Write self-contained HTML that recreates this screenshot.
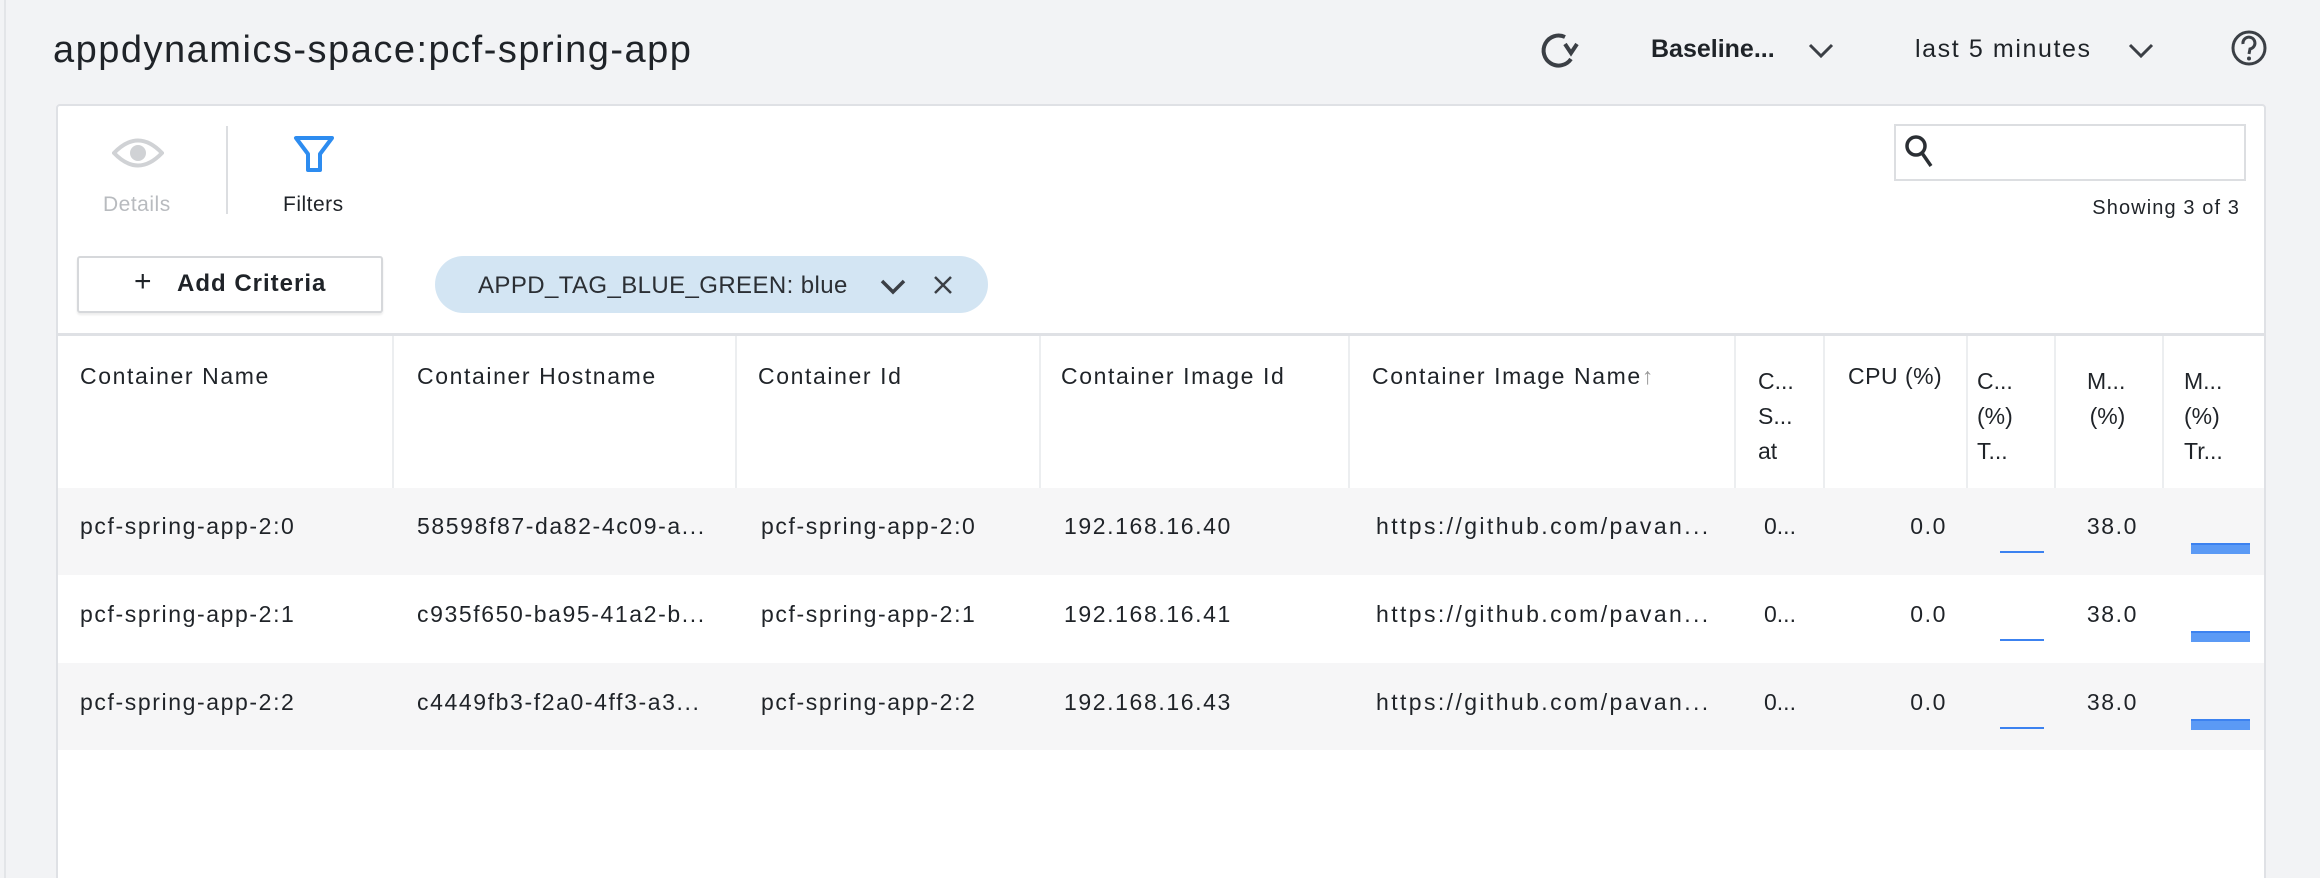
<!DOCTYPE html>
<html><head><meta charset="utf-8"><style>
*{margin:0;padding:0;box-sizing:border-box}
html,body{width:2320px;height:878px;overflow:hidden}
body{background:#f2f3f5;font-family:"Liberation Sans",sans-serif;color:#1f2328;position:relative}
.a{position:absolute;white-space:nowrap}
.panel{position:absolute;left:56px;top:104px;width:2210px;height:790px;background:#fff;border:2px solid #dfe1e5;border-radius:4px}
.t{font-size:23px;letter-spacing:1.6px}
.vl{position:absolute;width:2px;background:#eceef0;top:336px;height:152px}
.row{position:absolute;left:58px;width:2206px;height:87px}
</style></head><body>
<div class="a" style="left:4px;top:0;width:2px;height:878px;background:#e3e5e8"></div>
<div class="a" style="left:53px;top:29px;font-size:38px;letter-spacing:1.5px;color:#1f2328">appdynamics-space:pcf-spring-app</div>
<svg class="a" style="left:1535px;top:28px" width="46" height="46" viewBox="0 0 46 46"><path d="M30 9 A15 15 0 1 0 36 31" fill="none" stroke="#3b3f45" stroke-width="4"/><path d="M30 16 L36 25 L42 16" fill="none" stroke="#3b3f45" stroke-width="4"/></svg>
<div class="a" style="left:1651px;top:35px;font-size:25px;font-weight:bold;color:#1f2328">Baseline...</div>
<svg class="a" style="left:1808px;top:42px" width="26" height="18"><path d="M2 3 L13 14 L24 3" fill="none" stroke="#3b3f45" stroke-width="3"/></svg>
<div class="a" style="left:1915px;top:35px;font-size:25px;letter-spacing:1.6px;color:#1f2328">last 5 minutes</div>
<svg class="a" style="left:2128px;top:42px" width="26" height="18"><path d="M2 3 L13 14 L24 3" fill="none" stroke="#3b3f45" stroke-width="3"/></svg>
<svg class="a" style="left:2230px;top:29px" width="38" height="38" viewBox="0 0 38 38"><circle cx="19" cy="19" r="16" fill="none" stroke="#3b3f45" stroke-width="3"/><path d="M13 15 A6 6 0 1 1 20 20 L19 25" fill="none" stroke="#3b3f45" stroke-width="3"/><circle cx="19" cy="29.5" r="2" fill="#3b3f45"/></svg>
<div class="panel"></div>
<svg class="a" style="left:112px;top:136px" width="52" height="34" viewBox="0 0 52 34"><path d="M2 17 Q26 -8 50 17 Q26 42 2 17Z" fill="none" stroke="#d0d2d5" stroke-width="4"/><circle cx="26" cy="17" r="8" fill="#d0d2d5"/></svg>
<div class="a" style="left:103px;top:193px;font-size:21px;letter-spacing:0.5px;color:#b8bbbf">Details</div>
<div class="a" style="left:226px;top:126px;width:2px;height:88px;background:#dcdee1"></div>
<svg class="a" style="left:292px;top:134px" width="44" height="40" viewBox="0 0 44 40"><path d="M4 4 H40 L28 20 V36 H16 V20 Z" fill="none" stroke="#2d8cf0" stroke-width="4" stroke-linejoin="round"/></svg>
<div class="a" style="left:283px;top:193px;font-size:21px;letter-spacing:0.5px;color:#1f2328">Filters</div>
<div class="a" style="left:1894px;top:124px;width:352px;height:57px;border:2px solid #dcdee1;background:#fff"></div>
<svg class="a" style="left:1903px;top:133px" width="34" height="38" viewBox="0 0 34 38"><circle cx="13" cy="13" r="9" fill="none" stroke="#2b2f34" stroke-width="3.5"/><path d="M19 20 L28 33" stroke="#2b2f34" stroke-width="3.5"/></svg>
<div class="a" style="right:80px;top:197px;font-size:20px;letter-spacing:1.1px;color:#1f2328">Showing 3 of 3</div>
<div class="a" style="left:77px;top:256px;width:306px;height:57px;border:2px solid #d6d8db;border-radius:3px;background:#fff;box-shadow:0 2px 2px rgba(0,0,0,.08)"></div>
<div class="a" style="left:134px;top:265px;font-size:30px;color:#1f2328">+</div>
<div class="a" style="left:177px;top:270px;font-size:24px;font-weight:bold;letter-spacing:1px;color:#1f2328">Add Criteria</div>
<div class="a" style="left:435px;top:256px;width:553px;height:57px;border-radius:29px;background:#d3e5f3"></div>
<div class="a" style="left:478px;top:272px;font-size:24px;letter-spacing:0.4px;color:#2b2f34">APPD_TAG_BLUE_GREEN: blue</div>
<svg class="a" style="left:880px;top:278px" width="26" height="18"><path d="M2 3 L13 14 L24 3" fill="none" stroke="#3b3f45" stroke-width="3.5"/></svg>
<svg class="a" style="left:932px;top:274px" width="22" height="22"><path d="M3 3 L19 19 M19 3 L3 19" stroke="#3b3f45" stroke-width="2.5"/></svg>
<div class="a" style="left:58px;top:333px;width:2206px;height:3px;background:#dfe1e5"></div>
<div class="vl" style="left:392px"></div><div class="vl" style="left:735px"></div><div class="vl" style="left:1039px"></div><div class="vl" style="left:1348px"></div><div class="vl" style="left:1734px"></div><div class="vl" style="left:1823px"></div><div class="vl" style="left:1966px"></div><div class="vl" style="left:2054px"></div><div class="vl" style="left:2162px"></div>
<div class="a t" style="left:80px;top:363px">Container Name</div>
<div class="a t" style="left:417px;top:363px">Container Hostname</div>
<div class="a t" style="left:758px;top:363px">Container Id</div>
<div class="a t" style="left:1061px;top:363px">Container Image Id</div>
<div class="a t" style="left:1372px;top:363px">Container Image Name<span style="color:#999;font-weight:bold">↑</span></div>
<div class="a t" style="left:1758px;top:364px;line-height:35px;letter-spacing:0">C...<br>S...<br>at</div>
<div class="a t" style="left:1848px;top:363px;letter-spacing:0.5px">CPU (%)</div>
<div class="a t" style="left:1977px;top:364px;line-height:35px;letter-spacing:0">C...<br>(%)<br>T...</div>
<div class="a t" style="left:2087px;top:364px;line-height:35px;text-align:right;letter-spacing:0">M...<br>(%)</div>
<div class="a t" style="left:2184px;top:364px;line-height:35px;letter-spacing:0">M...<br>(%)<br>Tr...</div>

<div class="row" style="top:488px;background:#f6f6f7"></div>
<div class="row" style="top:575px;background:#fff"></div>
<div class="row" style="top:663px;background:#f6f6f7"></div>

<div class="a t" style="left:80px;top:513px">pcf-spring-app-2:0</div>
<div class="a t" style="left:417px;top:513px">58598f87-da82-4c09-a...</div>
<div class="a t" style="left:761px;top:513px">pcf-spring-app-2:0</div>
<div class="a t" style="left:1064px;top:513px">192.168.16.40</div>
<div class="a t" style="left:1376px;top:513px;letter-spacing:2.4px">https://github.com/pavan...</div>
<div class="a t" style="left:1764px;top:513px;letter-spacing:0">0...</div>
<div class="a t" style="right:373px;top:513px">0.0</div>
<div class="a t" style="right:182px;top:513px">38.0</div>
<div class="a" style="left:2000px;top:551px;width:44px;height:2px;background:#3c82f0"></div>
<div class="a" style="left:2191px;top:543px;width:59px;height:11px;background:#5b9af5;border-top:2px solid #3c82f0"></div>

<div class="a t" style="left:80px;top:601px">pcf-spring-app-2:1</div>
<div class="a t" style="left:417px;top:601px">c935f650-ba95-41a2-b...</div>
<div class="a t" style="left:761px;top:601px">pcf-spring-app-2:1</div>
<div class="a t" style="left:1064px;top:601px">192.168.16.41</div>
<div class="a t" style="left:1376px;top:601px;letter-spacing:2.4px">https://github.com/pavan...</div>
<div class="a t" style="left:1764px;top:601px;letter-spacing:0">0...</div>
<div class="a t" style="right:373px;top:601px">0.0</div>
<div class="a t" style="right:182px;top:601px">38.0</div>
<div class="a" style="left:2000px;top:639px;width:44px;height:2px;background:#3c82f0"></div>
<div class="a" style="left:2191px;top:631px;width:59px;height:11px;background:#5b9af5;border-top:2px solid #3c82f0"></div>

<div class="a t" style="left:80px;top:689px">pcf-spring-app-2:2</div>
<div class="a t" style="left:417px;top:689px">c4449fb3-f2a0-4ff3-a3...</div>
<div class="a t" style="left:761px;top:689px">pcf-spring-app-2:2</div>
<div class="a t" style="left:1064px;top:689px">192.168.16.43</div>
<div class="a t" style="left:1376px;top:689px;letter-spacing:2.4px">https://github.com/pavan...</div>
<div class="a t" style="left:1764px;top:689px;letter-spacing:0">0...</div>
<div class="a t" style="right:373px;top:689px">0.0</div>
<div class="a t" style="right:182px;top:689px">38.0</div>
<div class="a" style="left:2000px;top:727px;width:44px;height:2px;background:#3c82f0"></div>
<div class="a" style="left:2191px;top:719px;width:59px;height:11px;background:#5b9af5;border-top:2px solid #3c82f0"></div>
</body></html>
